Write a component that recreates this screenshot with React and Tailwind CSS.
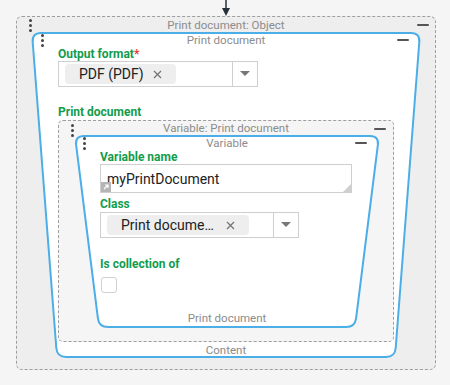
import React from 'react';

const green = 'text-[#129c4c]';

// rounded polygon path for the trapezoid outlines
function roundPath(pts, r) {
	const n = pts.length;
	let d = '';
	pts.forEach((p, i) => {
		const prev = pts[(i + n - 1) % n];
		const next = pts[(i + 1) % n];
		const toward = (q) => {
			const dx = q[0] - p[0], dy = q[1] - p[1], l = Math.hypot(dx, dy);
			return [p[0] + (dx / l) * r, p[1] + (dy / l) * r];
		};
		const s = toward(prev), e = toward(next);
		d += `${i ? 'L' : 'M'}${s[0]},${s[1]} Q${p[0]},${p[1]} ${e[0]},${e[1]} `;
	});
	return d + 'Z';
}

function Trapezoid({w, h, inset}) {
	const pts = [[1, 1], [w - 1, 1], [w - 1 - inset, h - 1], [inset + 1, h - 1]];
	return (
		<svg className="absolute inset-0" width={w} height={h}>
			<path d={roundPath(pts, 9)} fill="#ffffff" stroke="#4caee6" strokeWidth="2" />
		</svg>
	);
}

function Handle({className}) {
	return (
		<div className={'absolute flex flex-col gap-[2px] ' + className}>
			<span className="w-[3px] h-[3px] rounded-full bg-[#444]" />
			<span className="w-[3px] h-[3px] rounded-full bg-[#444]" />
			<span className="w-[3px] h-[3px] rounded-full bg-[#444]" />
		</div>
	);
}

function Minus({className}) {
	return <span className={'absolute w-[12px] h-[2px] rounded-full bg-[#555] ' + className} />;
}

function Cross() {
	return (
		<svg width="9" height="9" viewBox="0 0 9 9" className="shrink-0">
			<path d="M1 1L8 8M8 1L1 8" stroke="#757575" strokeWidth="1.3" />
		</svg>
	);
}

function Caret() {
	return (
		<svg width="10" height="6" viewBox="0 0 10 6">
			<path d="M0 0H10L5 5Z" fill="#777" />
		</svg>
	);
}

function Select({width, label, chipW}) {
	return (
		<div className="flex h-[26px] border border-[#cfcfcf] bg-white" style={{width}}>
			<div className="flex-1 flex items-center pl-[6px]">
				<div className="flex items-center h-[20px] bg-[#eeeeee] rounded-[4px] pl-[14px] pr-[14px] justify-between" style={{width: chipW}}>
					<span className="text-[14px] text-[#222] leading-none whitespace-nowrap">{label}</span>
					<Cross />
				</div>
			</div>
			<div className="w-[25px] border-l border-[#cfcfcf] flex items-center justify-center">
				<Caret />
			</div>
		</div>
	);
}

function Label({children}) {
	return <div className={'h-[14px] leading-[14px] text-[12px] font-bold ' + green}>{children}</div>;
}

function Caption({children}) {
	return <div className="h-[14px] leading-[14px] text-[11.5px] text-[#8c8c8c] text-center">{children}</div>;
}

export default function App() {
	return (
		<div className="relative w-[450px] h-[385px] bg-[#f5f5f5] pt-[16px] pl-[16px] font-['Roboto',sans-serif]">
			{/* incoming arrow */}
			<svg className="absolute left-[221px] top-0" width="10" height="17" viewBox="0 0 10 17">
				<path d="M5 0V9" stroke="#263238" strokeWidth="1.5" />
				<path d="M1 8H9L5 16Z" fill="#263238" />
			</svg>

			<div className="relative w-[420px] h-[354px] border border-dashed border-[#9e9e9e] rounded-[6px] bg-[#eeeeee]">
				<Handle className="left-[12px] top-[2px]" />
				<Minus className="left-[400px] top-[7px]" />
				<div className="pt-[1px]">
					<Caption>Print document: Object</Caption>
				</div>

				<div className="relative ml-[14px] w-[390px] h-[326px]">
					<Trapezoid w={390} h={326} inset={25} />
					<Handle className="left-[10px] top-[2px] z-10" />
					<Minus className="left-[366px] top-[7px] z-10" />
					<div className="relative z-10 pt-[1px] flex flex-col">
						<Caption>Print document</Caption>
						<div className="pl-[27px] flex flex-col">
							<Label>Output format<span className="text-[#e53935]">*</span></Label>
							<Select width={200} label="PDF (PDF)" chipW={111} />
							<div className="mt-[18px]">
								<Label>Print document</Label>
							</div>
							<div className="relative mt-[1px] w-[336px] h-[222px] border border-dashed border-[#9e9e9e] rounded-[5px] bg-[#f5f5f5]">
								<Handle className="left-[12px] top-[3px]" />
								<Minus className="left-[315px] top-[7px]" />
								<Caption>Variable: Print document</Caption>

								<div className="relative ml-[15px] w-[306px] h-[193px]">
									<Trapezoid w={306} h={193} inset={24} />
									<Handle className="left-[9px] top-[2px] z-10" />
									<Minus className="left-[281px] top-[7px] z-10" />
									<div className="relative z-10 pt-[1px] flex flex-col">
										<Caption>Variable</Caption>
										<div className="pl-[26px] flex flex-col">
											<Label>Variable name</Label>
											<div className="relative w-[252px] h-[29px] border border-[#cfcfcf] bg-white pl-[6px] flex items-center">
												<span className="text-[14px] text-[#222] leading-none">myPrintDocument</span>
												<svg className="absolute left-0 bottom-0" width="10" height="10" viewBox="0 0 10 10">
													<rect width="10" height="10" fill="#b5b5b5" />
													<path d="M3 7L7 3M4 3H7V6" stroke="#fff" strokeWidth="1.2" fill="none" />
												</svg>
												<svg className="absolute right-0 bottom-0" width="8" height="8" viewBox="0 0 8 8">
													<path d="M8 0V8H0Z" fill="#cfcfcf" />
												</svg>
											</div>
											<div className="mt-[4px]">
												<Label>Class</Label>
											</div>
											<div className="mt-[1px]">
												<Select width={199} label="Print docume…" chipW={142} />
											</div>
											<div className="mt-[19px]">
												<Label>Is collection of</Label>
											</div>
											<div className="mt-[6px] ml-[1px] w-[16px] h-[16px] border border-[#d0d0d0] rounded-[3px] bg-white" />
										</div>
										<div className="mt-[18px]">
											<Caption>Print document</Caption>
										</div>
									</div>
								</div>
							</div>
						</div>
						<div className="mt-[1px]">
							<Caption>Content</Caption>
						</div>
					</div>
				</div>
			</div>
		</div>
	);
}
